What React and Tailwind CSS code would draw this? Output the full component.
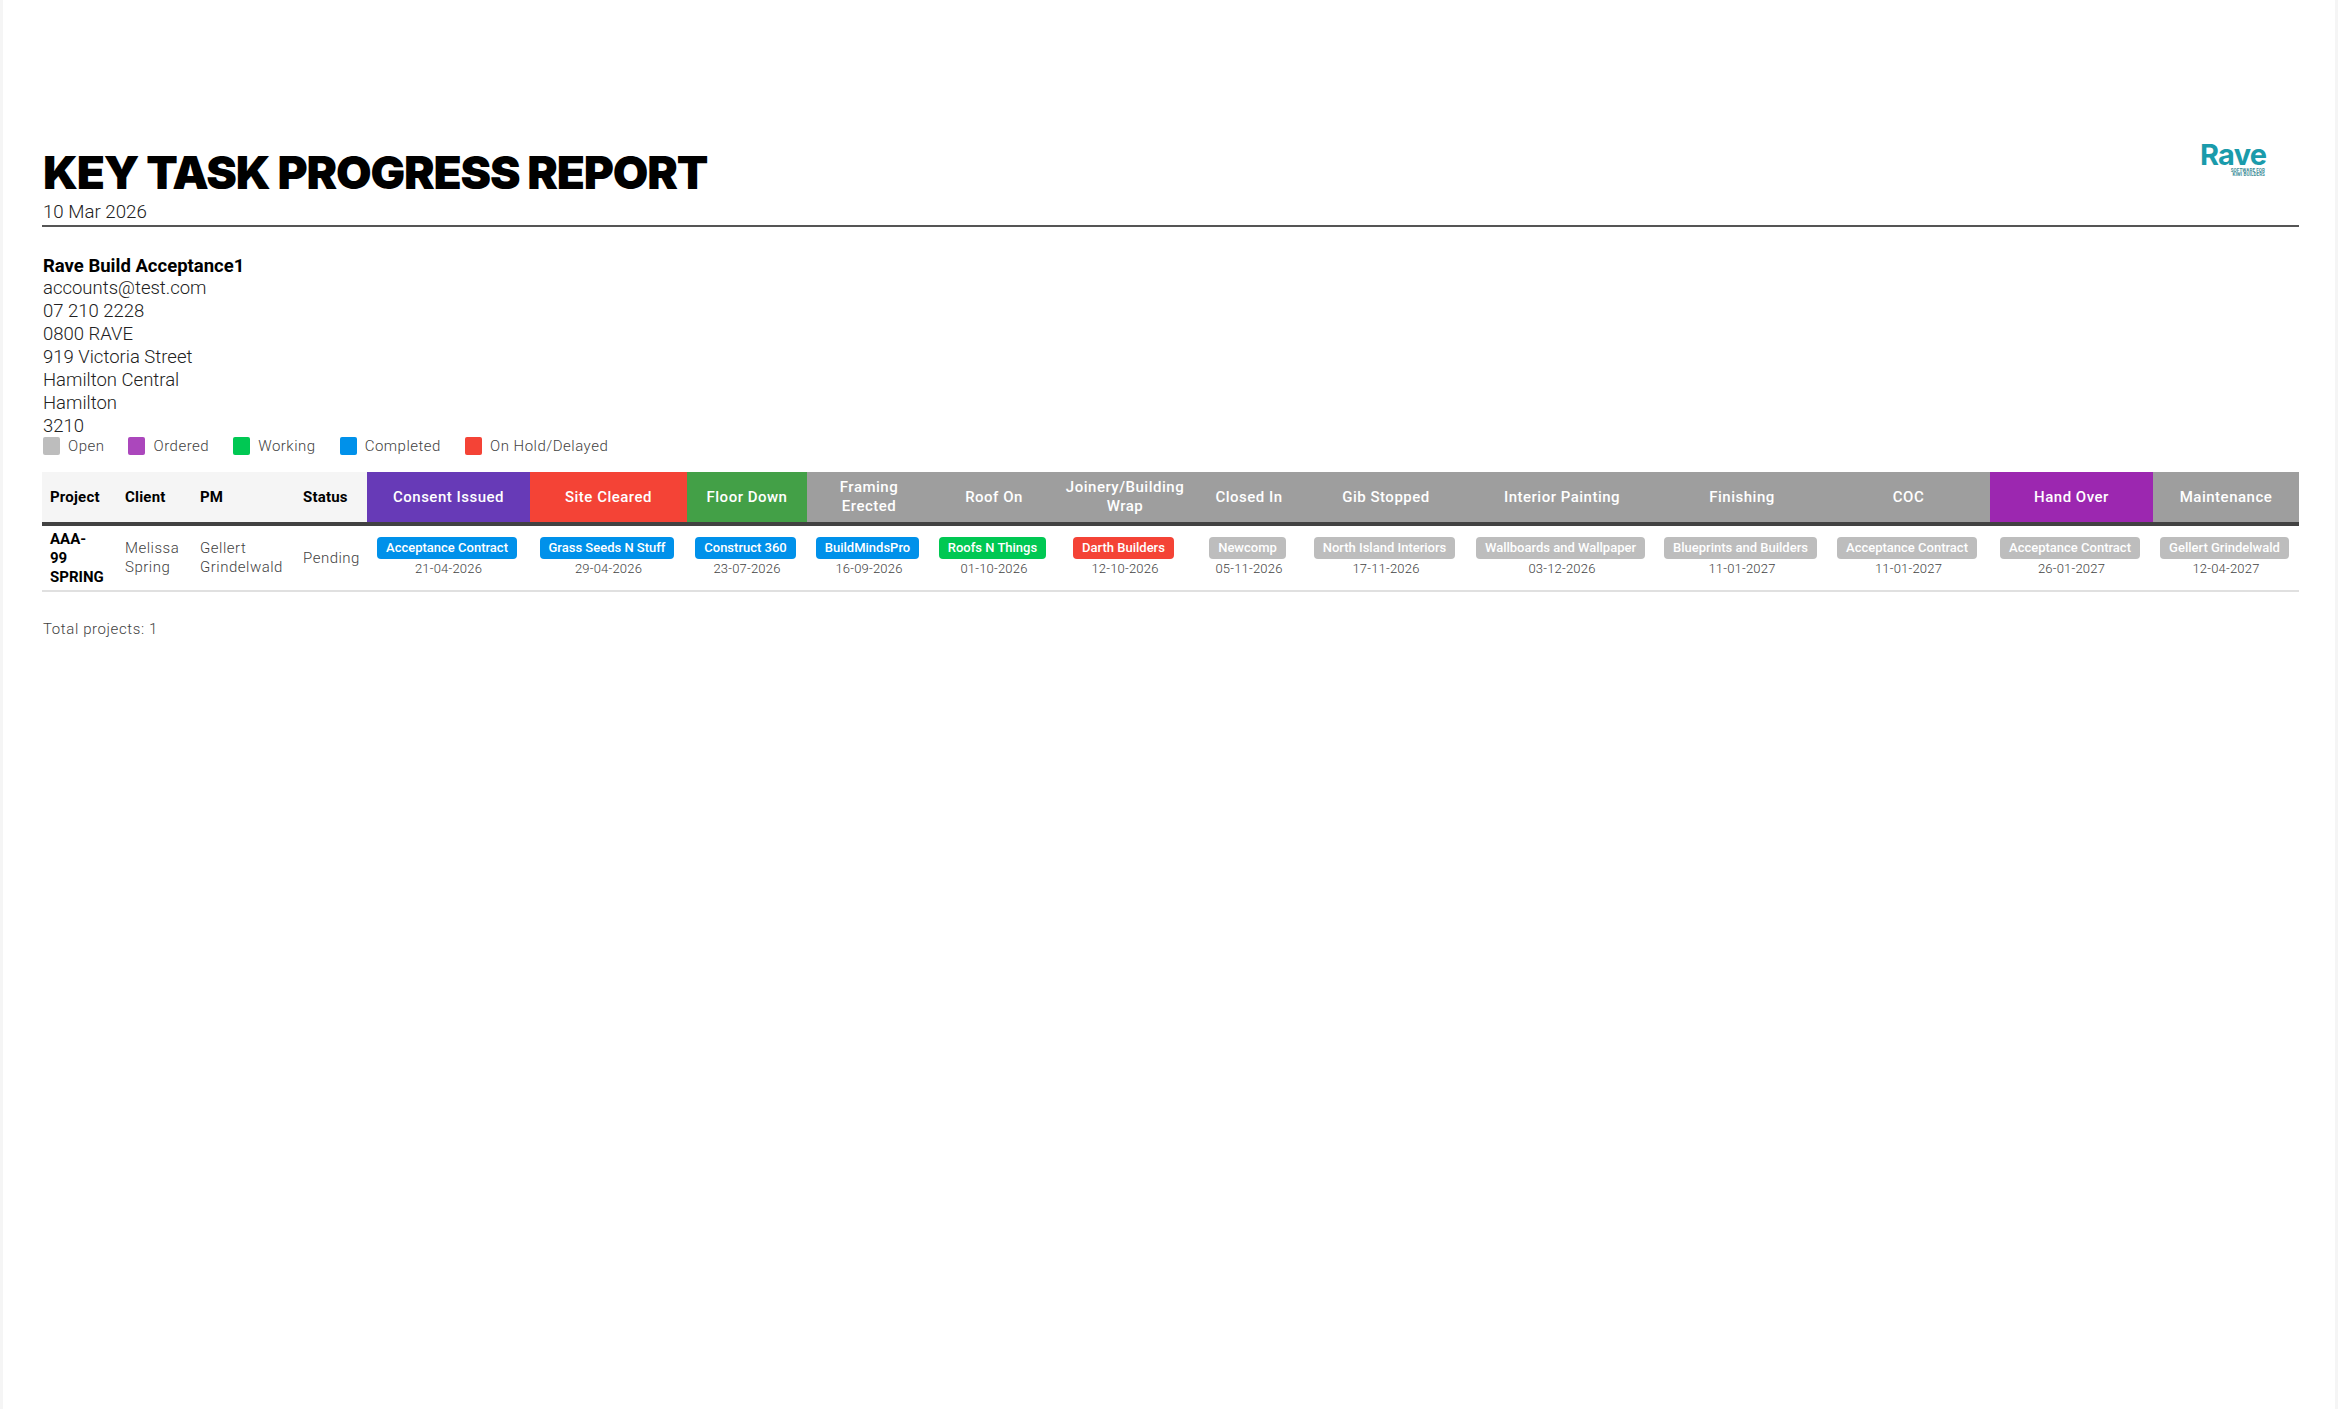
const cols = [
  { t: "Consent Issued", w: 163, bg: "bg-[#673ab7]", b: "Acceptance Contract", c: "bg-[#0091ea]", d: "21-04-2026" },
  { t: "Site Cleared", w: 157, bg: "bg-[#f44336]", b: "Grass Seeds N Stuff", c: "bg-[#0091ea]", d: "29-04-2026" },
  { t: "Floor Down", w: 120, bg: "bg-[#43a047]", b: "Construct 360", c: "bg-[#0091ea]", d: "23-07-2026" },
  { t: "Framing Erected", w: 124, bg: "bg-[#9e9e9e]", b: "BuildMindsPro", c: "bg-[#0091ea]", d: "16-09-2026" },
  { t: "Roof On", w: 126, bg: "bg-[#9e9e9e]", b: "Roofs N Things", c: "bg-[#00c853]", d: "01-10-2026" },
  { t: "Joinery/Building Wrap", w: 136, bg: "bg-[#9e9e9e]", b: "Darth Builders", c: "bg-[#f44336]", d: "12-10-2026" },
  { t: "Closed In", w: 112, bg: "bg-[#9e9e9e]", b: "Newcomp", c: "bg-[#bdbdbd]", d: "05-11-2026" },
  { t: "Gib Stopped", w: 162, bg: "bg-[#9e9e9e]", b: "North Island Interiors", c: "bg-[#bdbdbd]", d: "17-11-2026" },
  { t: "Interior Painting", w: 190, bg: "bg-[#9e9e9e]", b: "Wallboards and Wallpaper", c: "bg-[#bdbdbd]", d: "03-12-2026" },
  { t: "Finishing", w: 170, bg: "bg-[#9e9e9e]", b: "Blueprints and Builders", c: "bg-[#bdbdbd]", d: "11-01-2027" },
  { t: "COC", w: 163, bg: "bg-[#9e9e9e]", b: "Acceptance Contract", c: "bg-[#bdbdbd]", d: "11-01-2027" },
  { t: "Hand Over", w: 163, bg: "bg-[#9c27b0]", b: "Acceptance Contract", c: "bg-[#bdbdbd]", d: "26-01-2027" },
  { t: "Maintenance", w: 146, bg: "bg-[#9e9e9e]", b: "Gellert Grindelwald", c: "bg-[#bdbdbd]", d: "12-04-2027" },
];
const legend = [
  ["Open", "bg-[#bdbdbd]"],
  ["Ordered", "bg-[#ab47bc]"],
  ["Working", "bg-[#00c853]"],
  ["Completed", "bg-[#0091ea]"],
  ["On Hold/Delayed", "bg-[#f44336]"],
];
const left = [["Project", 75], ["Client", 75], ["PM", 103], ["Status", 72]];

export default function App() {
  return (
    <div className="min-h-[1409px] bg-[#f5f5f5] px-[3px] font-['Roboto',sans-serif]">
      <div className="min-h-[1409px] bg-white pl-[39px] pr-[36px] pt-[133px] text-[#212121]">
        <div className="flex items-start justify-between border-b-2 border-[#555555] h-[94px]">
          <div className="pl-[1px]">
            <h1 className="font-['Inter',sans-serif] text-[46px] leading-[46px] font-black text-black tracking-[-1.2px] mt-[16px]">KEY TASK PROGRESS REPORT</h1>
            <div className="text-[18.7px] leading-[24px] font-light mt-[5px]">10 Mar 2026</div>
          </div>
          <div className="mr-[34px] mt-[9px] w-[66px] text-[#1a9bab]">
            <div className="font-['Inter',sans-serif] text-[29px] leading-[26px] font-bold tracking-[-0.8px] pl-[1px]">Rave</div>
            <div className="text-right text-[4.5px] leading-[4px] font-bold text-[#3d8d98] mt-[1px] tracking-[0.1px]">SOFTWARE FOR<br />KIWI BUILDERS</div>
          </div>
        </div>
        <div className="mt-[29px] pl-[1px] text-[18.5px] leading-[23px] font-light">
          <div className="font-bold text-black leading-[21px]">Rave Build Acceptance1</div>
          <div>accounts@test.com</div>
          <div>07 210 2228</div>
          <div>0800 RAVE</div>
          <div>919 Victoria Street</div>
          <div>Hamilton Central</div>
          <div>Hamilton</div>
          <div>3210</div>
        </div>
        <div className="flex gap-[24px] -mt-[3px] h-[22px] items-center pl-[1px]">
          {legend.map(([n, c]) => (
            <div key={n} className="flex items-center gap-[8px] text-[15px] font-light tracking-[0.5px] text-[#424242]">
              <span className={`w-[17px] h-[18px] rounded-[2px] ${c}`} />
              {n}
            </div>
          ))}
        </div>
        <table className="mt-[15px] table-fixed border-collapse w-[2257px]">
          <thead>
            <tr className="h-[52px] border-b-[4px] border-[#424242]">
              {left.map(([n, w]) => (
                <th key={n} style={{ width: w }} className="bg-[#f5f5f5] px-[8px] text-left text-[15px] font-bold text-black tracking-[0.2px]">{n}</th>
              ))}
              {cols.map((c) => (
                <th key={c.t} style={{ width: c.w }} className={`${c.bg} px-[8px] text-center text-[15px] leading-[19px] font-medium text-white tracking-[0.5px]`}>{c.t}</th>
              ))}
            </tr>
          </thead>
          <tbody>
            <tr className="h-[67px] border-b-2 border-[#e0e0e0]">
              <td className="px-[8px] text-[15px] leading-[19px] font-bold text-black">AAA-<br />99 SPRING</td>
              <td className="px-[8px] text-[15px] leading-[19px] font-light tracking-[0.5px] text-[#424242]">Melissa Spring</td>
              <td className="px-[8px] text-[15px] leading-[19px] font-light tracking-[0.5px] text-[#424242]">Gellert Grindelwald</td>
              <td className="px-[8px] text-[15px] leading-[19px] font-light tracking-[0.5px] text-[#424242]">Pending</td>
              {cols.map((c) => (
                <td key={c.t} className="text-center align-middle">
                  <div className="flex flex-col items-center pb-[4px]">
                    <span className={`${c.c} -ml-[3px] rounded-[4px] px-[9px] h-[22px] leading-[22px] text-[13px] font-medium text-white whitespace-nowrap`}>{c.b}</span>
                    <span className="text-[13px] leading-[15px] mt-[2px] font-light text-[#424242] tracking-[0.2px]">{c.d}</span>
                  </div>
                </td>
              ))}
            </tr>
          </tbody>
        </table>
        <div className="mt-[27px] pl-[1px] text-[15px] leading-[20px] font-light tracking-[0.6px] text-[#424242]">Total projects: 1</div>
      </div>
    </div>
  );
}
